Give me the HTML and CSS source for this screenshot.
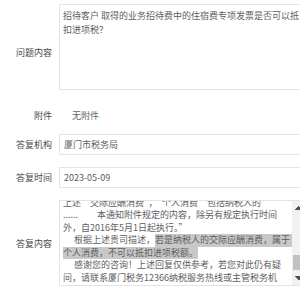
FILE: index.html
```html
<!DOCTYPE html>
<html lang="zh-CN">
<head>
  <meta charset="UTF-8" />
  <meta name="viewport" content="width=device-width, initial-scale=1.0" />
  <title>咨询详情</title>
  <link rel="stylesheet" href="styles.css">
</head>
<body>
  <div class="form">
    <div class="row row-question">
      <label class="label">问题内容</label>
      <div class="field field-area">招待客户 取得的业务招待费中的住宿费专项发票是否可以抵扣进项税？</div>
    </div>

    <div class="row row-attach">
      <label class="label">附件</label>
      <div class="plain">无附件</div>
    </div>

    <div class="row">
      <label class="label">答复机构</label>
      <div class="field field-input">厦门市税务局</div>
    </div>

    <div class="row">
      <label class="label">答复时间</label>
      <div class="field field-input">2023-05-09</div>
    </div>

    <div class="row row-reply">
      <label class="label">答复内容</label>
      <div class="field reply-wrap">
        <!-- the box is scrolled down, so only the tail of the reply shows -->
        <div class="reply-box">
          <div class="line first">上述“交际应酬消费”，“个人消费”包括纳税人的</div>
          <div class="line"><span class="dots">......</span>本通知附件规定的内容，除另有规定执行时间</div>
          <div class="line">外，自2016年5月1日起执行。”</div>
          <div class="line indent flex">根据上述贵司描述，<span class="sel sel-fill">若是纳税人的交际应酬消费，属于</span></div>
          <div class="line"><span class="sel">个人消费，不可以抵扣进项税额。</span></div>
          <div class="line indent">感谢您的咨询！上述回复仅供参考，若您对此仍有疑</div>
          <div class="line">问，请联系厦门税务12366纳税服务热线或主管税务机</div>
        </div>
        <div class="scrollbar">
          <div class="sb-btn sb-up"></div>
          <div class="sb-track"><div class="sb-thumb"></div></div>
          <div class="sb-btn sb-down"></div>
        </div>
      </div>
    </div>
  </div>
</body>
</html>
```

FILE: styles.css
```css
* {
  margin: 0;
  padding: 0;
  box-sizing: border-box;
}

body {
  font-family: "Noto Sans CJK SC", "Microsoft YaHei", sans-serif;
  font-size: 9px;
  color: #555;
  background: #fff;
  width: 300px;
  height: 300px;
  overflow: hidden;
}

.form {
  width: 308px;
  padding-top: 4px;
}

.row {
  display: flex;
  align-items: center;
  margin-bottom: 12px;
}

.label {
  width: 52px;
  margin-right: 7px;
  text-align: right;
  color: #4a4a4a;
  flex-shrink: 0;
}

.field {
  flex: 1;
  border: 1px solid #e4e4e4;
  background: #fff;
  color: #5e5e5e;
}

.field-area {
  height: 86px;
  padding: 4px 3px;
  line-height: 14px;
}

.row-question .label {
  padding-top: 10px;
}

.row-attach {
  height: 20px;
  margin-top: 15px;
  margin-bottom: 9px;
}

.plain {
  padding-left: 13px;
  color: #666;
}

.field-input {
  height: 21px;
  line-height: 19px;
  padding: 0 4px;
}

/* reply textarea with a drawn scrollbar */
.reply-wrap {
  position: relative;
  height: 86px;
}

.reply-box {
  height: 84px;
  padding: 0 15px 0 3px;
  line-height: 12.5px;
  overflow: hidden;
}

.scrollbar {
  position: absolute;
  top: 0;
  right: 0;
  bottom: 0;
  width: 15px;
  background: #f1f1f1;
  display: flex;
  flex-direction: column;
}

.sb-btn {
  height: 14px;
  flex-shrink: 0;
}

.sb-up {
  background:
    linear-gradient(to bottom right, transparent 50%, #505050 50%) 3px 5px / 4px 4px no-repeat,
    linear-gradient(to bottom left, transparent 50%, #505050 50%) 7px 5px / 4px 4px no-repeat;
}

.sb-down {
  background:
    linear-gradient(to top right, transparent 50%, #505050 50%) 3px 5px / 4px 4px no-repeat,
    linear-gradient(to top left, transparent 50%, #505050 50%) 7px 5px / 4px 4px no-repeat;
}

.sb-track {
  flex: 1;
  padding: 40px 2px 0 1px;
}

.sb-thumb {
  height: 15px;
  background: #c1c1c1;
}

.line {
  white-space: nowrap;
  height: 12.5px;
}

.line.first {
  margin-top: -4.5px;
}

.indent {
  padding-left: 11px;
}

.flex {
  display: flex;
}

.dots {
  display: inline-block;
  width: 34px;
}

.sel {
  background: #c8c8c8;
  display: inline-block;
  height: 12.5px;
}

.sel-fill {
  flex: 1;
}
```
